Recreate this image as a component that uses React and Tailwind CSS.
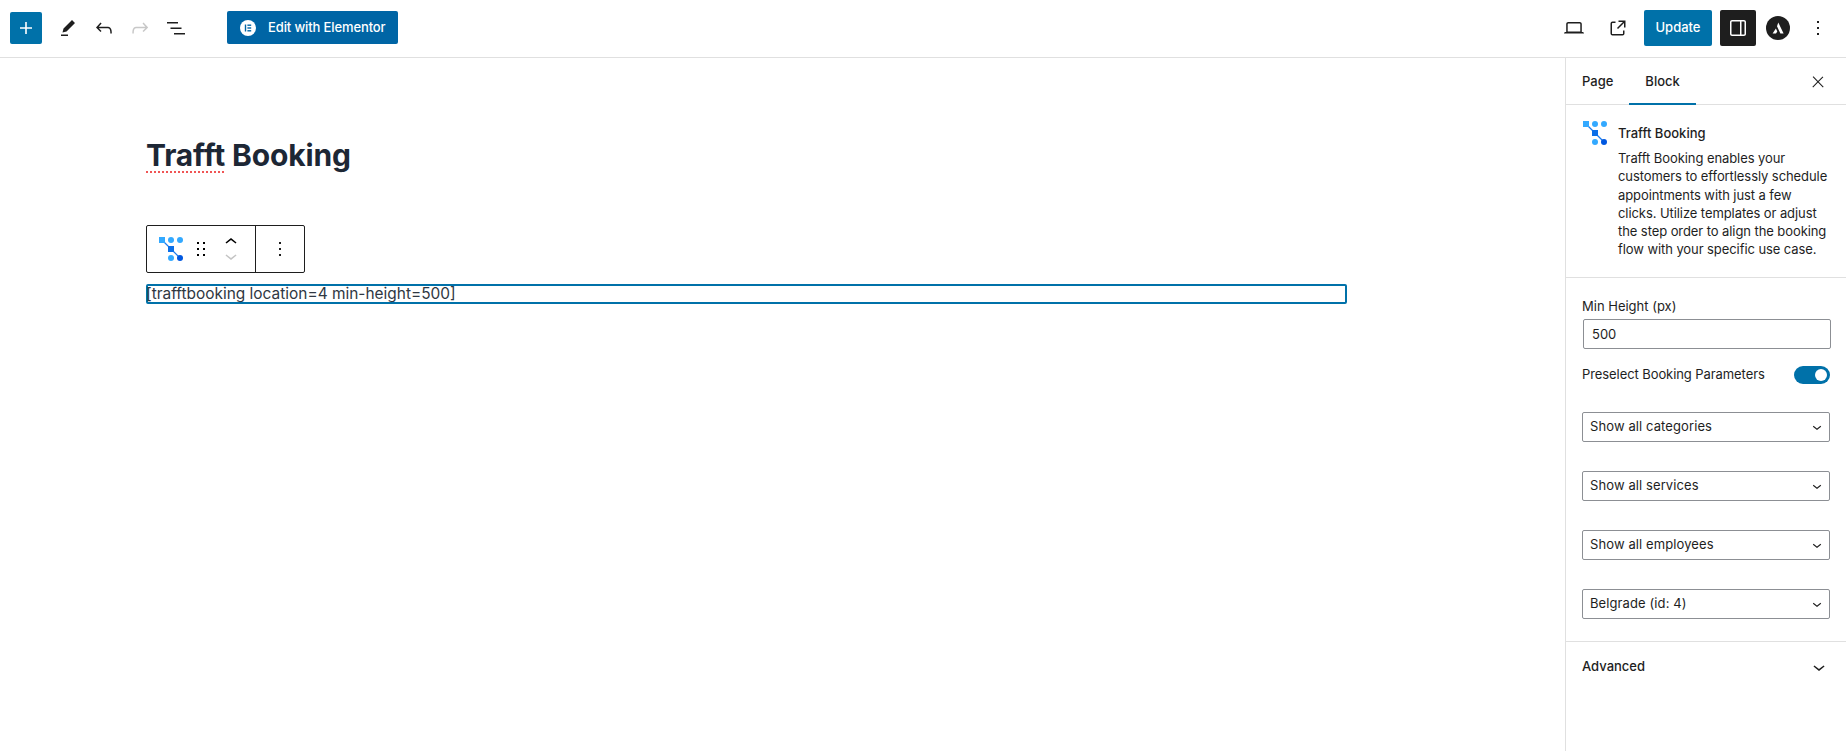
import React from "react";

const P = ({ d, size = 24, className = "" }) => (
  <svg viewBox="0 0 24 24" width={size} height={size} className={className} fill="currentColor">
    <path d={d} />
  </svg>
);

const ICON = {
  plus: "M18 11.2h-5.2V6h-1.6v5.2H6v1.6h5.2V18h1.6v-5.2H18z",
  pencil: "m19 7-3-3-8.5 8.5-1 4 4-1L19 7Zm-7 11.5H5V20h7v-1.5Z",
  undo: "M18.3 11.7c-.6-.6-1.4-.9-2.3-.9H6.7l2.9-3.3-1.1-1-4.5 5L8.5 16l1-1-2.7-2.7H16c.5 0 .9.2 1.3.5 1 1 1 3.4 1 4.5v.3h1.5v-.2c0-1.5 0-4.3-1.5-5.7z",
  redo: "M15.6 6.5l-1.1 1 2.9 3.3H8c-.9 0-1.7.3-2.3.9-1.4 1.5-1.4 4.2-1.4 5.6v.2h1.5v-.3c0-1.1 0-3.5 1-4.5.3-.3.7-.5 1.3-.5h9.2L14.5 15l1.1 1.1 4.6-4.6-4.6-5z",
  list: "M3 6h11v1.5H3V6Zm3.5 5.5h11V13h-11v-1.5ZM21 17H10v1.5h11V17Z",
  laptop: "M20.5 16h-.7V8c0-1.1-.9-2-2-2H6.2c-1.1 0-2 .9-2 2v8h-.7c-.8 0-1.5.7-1.5 1.5h20c0-.8-.7-1.5-1.5-1.5zM5.7 8c0-.3.2-.5.5-.5h11.6c.3 0 .5.2.5.5v7.6H5.7V8z",
  external: "M19.5 4.5h-7V6h4.44l-5.97 5.97 1.06 1.06L18 7.06v4.44h1.5v-7Zm-13 1a2 2 0 0 0-2 2v10a2 2 0 0 0 2 2h10a2 2 0 0 0 2-2v-3H17v3a.5.5 0 0 1-.5.5h-10a.5.5 0 0 1-.5-.5v-10a.5.5 0 0 1 .5-.5h3V5.5h-3Z",
  drawer: "M18 4H6c-1.1 0-2 .9-2 2v12c0 1.1.9 2 2 2h12c1.1 0 2-.9 2-2V6c0-1.1-.9-2-2-2zm-4 14.5H6c-.3 0-.5-.2-.5-.5V6c0-.3.2-.5.5-.5h8v13zm4.5-.5c0 .3-.2.5-.5.5h-2.5v-13H18c.3 0 .5.2.5.5v12z",
  more: "M13 19h-2v-2h2v2zm0-6h-2v-2h2v2zm0-6h-2V5h2v2z",
  close: "M13 11.8l6.1-6.3-1-1-6.1 6.2-6.1-6.3-1 1 6.1 6.3-6.5 6.7 1 1 6.5-6.6 6.5 6.6 1-1z",
  up: "M6.5 12.4L12 8l5.5 4.4-.9 1.2L12 10l-4.5 3.6-1-1.2z",
  down: "M17.5 11.6L12 16l-5.5-4.4.9-1.2L12 14l4.6-3.6 1 1.2z",
  drag: "M8 7h2V5H8v2zm0 6h2v-2H8v2zm0 6h2v-2H8v2zm6-14v2h2V5h-2zm0 8h2v-2h-2v2zm0 6h2v-2h-2v2z",
};

const IconBtn = ({ d, className = "text-[#1e1e1e]" }) => (
  <button className={`flex h-9 w-9 items-center justify-center ${className}`}>
    <P d={d} />
  </button>
);

const Trafft = () => (
  <svg viewBox="0 0 24 24" width="24" height="24" className="shrink-0">
    <path d="M3 3 L21 21" stroke="#1a7cf0" strokeWidth="1.2" />
    <rect x="0" y="0" width="6" height="6" fill="#33a9ff" />
    <circle cx="12" cy="3" r="3" fill="#33a9ff" />
    <circle cx="21" cy="3" r="3" fill="#33a9ff" />
    <rect x="9" y="9" width="6" height="6" fill="#0b6fe8" />
    <circle cx="12" cy="21" r="3" fill="#33a9ff" />
    <circle cx="21" cy="21" r="3" fill="#0057e0" />
  </svg>
);

const Select = ({ children }) => (
  <div className="flex h-[30px] w-[248px] items-center justify-between rounded-[2px] border border-[#8c8f94] pl-[7px] pr-[3px] text-[13px] tracking-[0.1px] text-[#1e1e1e]">
    <span>{children}</span>
    <svg viewBox="0 0 24 24" width="18" height="18" fill="#1e1e1e"><path d={ICON.down} /></svg>
  </div>
);

export default function App() {
  return (
    <div className="flex h-[751px] w-[1846px] flex-col overflow-hidden bg-white text-[13px] text-[#1e1e1e] font-['Inter',sans-serif]">
      {/* Top bar */}
      <header className="flex h-[58px] shrink-0 items-center border-b border-[#e0e0e0] bg-white pb-[2px] pl-[10px] pr-[10px]">
        <button className="flex h-8 w-8 items-center justify-center rounded-[2px] bg-[#0071a9] text-white">
          <P d={ICON.plus} />
        </button>
        <div className="ml-[8px] flex items-center">
          <IconBtn d={ICON.pencil} />
          <IconBtn d={ICON.undo} />
          <IconBtn d={ICON.redo} className="text-[#c8c8c8]" />
          <IconBtn d={ICON.list} />
        </div>
        <button className="ml-[33px] flex h-[33px] w-[171px] items-center rounded-[2px] bg-[#0065a5] pl-[13px] text-[13px] font-medium tracking-[-0.12px] text-white">
          <svg viewBox="0 0 16 16" width="16" height="16" className="mr-[12px]">
            <circle cx="8" cy="8" r="8" fill="#fff" />
            <rect x="4.8" y="4.5" width="1.4" height="7" fill="#0065a5" />
            <rect x="7.4" y="4.5" width="3.8" height="1.4" fill="#0065a5" />
            <rect x="7.4" y="7.3" width="3.8" height="1.4" fill="#0065a5" />
            <rect x="7.4" y="10.1" width="3.8" height="1.4" fill="#0065a5" />
          </svg>
          Edit with Elementor
        </button>
        <div className="ml-auto flex items-center">
          <IconBtn d={ICON.laptop} />
          <div className="ml-[8px]"><IconBtn d={ICON.external} /></div>
          <button className="ml-[8px] h-9 w-[68px] rounded-[2px] bg-[#0071a9] text-[13px] font-medium text-white">Update</button>
          <button className="ml-[8px] flex h-9 w-9 items-center justify-center rounded-[2px] bg-[#1e1e1e] text-white">
            <P d={ICON.drawer} />
          </button>
          <div className="ml-[10px] flex h-6 w-6 items-center justify-center rounded-full bg-[#1e1e1e]">
            <svg viewBox="0 0 24 24" width="24" height="24" fill="#fff">
              <path d="M12.3 6.6 L17.6 17.6 L14.4 17.6 L11 10.2 Z M9.9 12.6 L11.3 15.4 L10 17.6 L6.6 17.6 Z" />
            </svg>
          </div>
          <div className="ml-[10px]"><IconBtn d={ICON.more} /></div>
        </div>
      </header>

      <div className="flex min-h-0 flex-1">
        {/* Canvas */}
        <main className="min-w-0 flex-1 pl-[146px]">
          <h1 className="mt-[77px] text-[30px] font-bold leading-[40px] tracking-[-0.15px] text-[#1d2735]">
            <span className="underline decoration-dotted decoration-[#f05555] decoration-2 underline-offset-[5px]">Trafft</span> Booking
          </h1>
          <div className="mt-[50px] flex h-[48px] w-[159px] items-center rounded-[2px] border border-[#1e1e1e] bg-white">
            <div className="flex h-full w-[109px] items-center border-r border-[#1e1e1e] pl-[12px]">
              <Trafft />
              <svg viewBox="0 0 24 24" width="24" height="24" className="ml-[6px]"><path d={ICON.drag} /></svg>
              <div className="ml-[6px] flex flex-col">
                <svg viewBox="0 0 24 24" width="24" height="24" className="mb-[-10px]"><path d={ICON.up} /></svg>
                <svg viewBox="0 0 24 24" width="24" height="24" fill="#c4c4c4"><path d={ICON.down} /></svg>
              </div>
            </div>
            <div className="flex flex-1 justify-center"><P d={ICON.more} /></div>
          </div>
          <div className="mt-[11px] h-[20px] w-[1201px] rounded-[2px] border-2 border-[#0071a9] text-[15.45px] leading-[16px] text-[#2f3742]">
            <span className="ml-[-2px] block h-[16px] overflow-visible whitespace-nowrap">[trafftbooking location=4 min-height=500]</span>
          </div>
        </main>

        {/* Sidebar */}
        <aside className="w-[281px] shrink-0 border-l border-[#e0e0e0]">
          <div className="flex h-[47px] items-stretch border-b border-[#e0e0e0]">
            <div className="flex items-center px-[16px] pt-[2px] font-medium">Page</div>
            <div className="mb-[-1px] flex items-center border-b-2 border-[#0071a9] px-[16px] pt-[2px] font-medium">Block</div>
            <button className="ml-auto mr-[10px] flex w-9 items-center justify-center pt-[2px]">
              <P d={ICON.close} size={18} />
            </button>
          </div>

          <section className="flex h-[173px] gap-[11px] border-b border-[#e0e0e0] pl-[17px] pr-[16px] pt-[16px]">
            <Trafft />
            <div className="min-w-0 flex-1 leading-[18.2px]">
              <div className="mt-[3px] font-medium">Trafft Booking</div>
              <p className="mt-[7px] tracking-[-0.08px]">Trafft Booking enables your customers to effortlessly schedule appointments with just a few clicks. Utilize templates or adjust the step order to align the booking flow with your specific use case.</p>
            </div>
          </section>

          <section className="h-[364px] border-b border-[#e0e0e0] pl-[16px] pt-[19px]">
            <label className="block leading-[18px]">Min Height (px)</label>
            <input
              readOnly
              value="500"
              className="mt-[4px] ml-[1px] block h-[30px] w-[248px] rounded-[2px] border border-[#8c8f94] px-[8px] text-[13px] text-[#1e1e1e] outline-none"
            />
            <div className="mt-[17px] flex h-[18px] w-[248px] items-center justify-between">
              <span className="tracking-[-0.08px]">Preselect Booking Parameters</span>
              <span className="flex h-[18px] w-[36px] items-center justify-end rounded-full bg-[#0071a9] pr-[3px]">
                <span className="h-3 w-3 rounded-full bg-white" />
              </span>
            </div>
            <div className="mt-[28px] flex flex-col gap-[29px]">
              <Select>Show all categories</Select>
              <Select>Show all services</Select>
              <Select>Show all employees</Select>
              <Select>Belgrade (id: 4)</Select>
            </div>
          </section>

          <div className="flex h-[50px] items-center justify-between pl-[16px] pr-[15px] font-medium">
            <span>Advanced</span>
            <P d={ICON.down} />
          </div>
        </aside>
      </div>
    </div>
  );
}
